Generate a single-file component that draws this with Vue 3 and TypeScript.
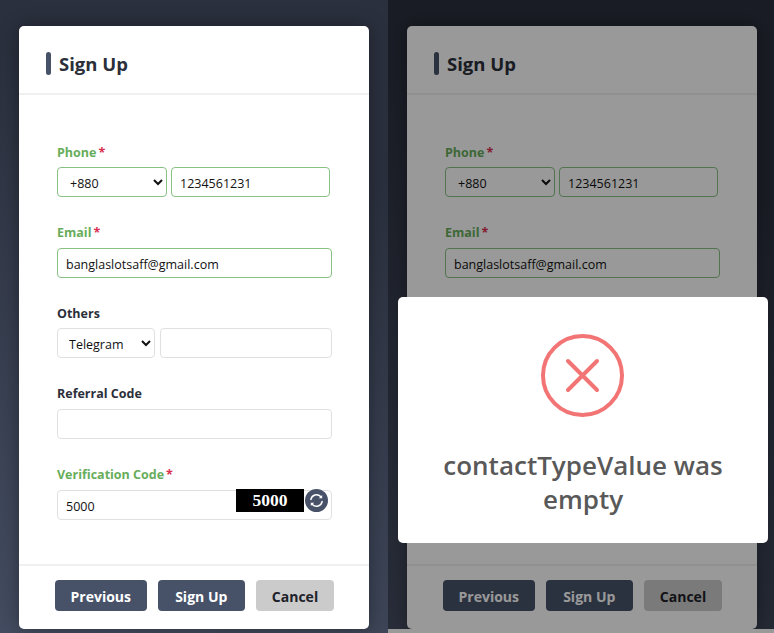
<script setup lang="ts">
const panels = [{ dimmed: false }, { dimmed: true }];
</script>

<template>
  <div class="screen">
    <section v-for="(panel, i) in panels" :key="i" class="panel" :class="{ dimmed: panel.dimmed }">
      <div class="card">
        <header class="card-head">
          <span class="accent"></span>
          <h1>Sign Up</h1>
        </header>

        <form class="card-body" @submit.prevent>
          <div class="field valid">
            <label>Phone<em>*</em></label>
            <div class="row phone">
              <select class="ctl sel-phone">
                <option>+880</option>
              </select>
              <input class="ctl grow" value="1234561231" />
            </div>
          </div>

          <div class="field valid">
            <label>Email<em>*</em></label>
            <input class="ctl" value="banglaslotsaff@gmail.com" />
          </div>

          <div class="field">
            <label>Others</label>
            <div class="row others">
              <select class="ctl sel-other">
                <option>Telegram</option>
              </select>
              <input class="ctl grow" />
            </div>
          </div>

          <div class="field">
            <label>Referral Code</label>
            <input class="ctl" />
          </div>

          <div class="field code">
            <label>Verification Code<em>*</em></label>
            <div class="code-wrap">
              <input class="ctl" value="5000" />
              <div class="captcha">
                <span class="captcha-img">5000</span>
                <span class="refresh">
                  <svg width="15" height="15" viewBox="0 0 15 15" fill="none">
                    <path d="M1.9 6.4A5.7 5.7 0 0 1 11.6 3.5" stroke="#fff" stroke-width="1.5" stroke-linecap="round" />
                    <path d="M13.2 1.9v3.4H9.8z" fill="#fff" />
                    <path d="M13.1 8.6A5.7 5.7 0 0 1 3.4 11.5" stroke="#fff" stroke-width="1.5" stroke-linecap="round" />
                    <path d="M1.8 13.1V9.7h3.4z" fill="#fff" />
                  </svg>
                </span>
              </div>
            </div>
          </div>
        </form>

        <footer class="card-foot">
          <button class="btn prev">Previous</button>
          <button class="btn submit">Sign Up</button>
          <button class="btn cancel">Cancel</button>
        </footer>
      </div>
      <div v-if="panel.dimmed" class="strip"></div>
    </section>

    <div class="alert">
      <svg class="alert-icon" width="83" height="83" viewBox="0 0 83 83" fill="none">
        <circle cx="41.5" cy="41.5" r="39.5" stroke="#f27474" stroke-width="4" />
        <path d="M27 27l29 29M56 27L27 56" stroke="#f27474" stroke-width="4" stroke-linecap="round" />
      </svg>
      <p>contactTypeValue was empty</p>
    </div>
  </div>
</template>

<style>
html,
body {
  margin: 0;
  overflow: hidden;
}
</style>

<style scoped>
.screen {
  position: relative;
  display: flex;
  width: 774px;
  height: 633px;
  overflow: hidden;
  font-family: "Open Sans", "Noto Sans", sans-serif;
  color: #2b2f3a;
}

.panel {
  position: relative;
  flex: 0 0 388px;
  box-sizing: border-box;
  padding: 26px 0 0 19px;
  background: linear-gradient(20deg, #434c60, #2b303e 75%);
}

.panel.dimmed {
  flex-basis: 386px;
}

.panel.dimmed::after {
  content: "";
  position: absolute;
  inset: 0;
  background: rgba(0, 0, 0, 0.4);
}

.strip {
  position: absolute;
  left: 0;
  right: 0;
  bottom: 0;
  height: 4px;
  background: #fff;
}

.card {
  display: flex;
  flex-direction: column;
  width: 350px;
  height: 603px;
  background: #fff;
  border-radius: 5px;
  box-shadow: 0 0 18px rgba(0, 0, 0, 0.35);
}

.card-head {
  display: flex;
  align-items: center;
  gap: 8px;
  box-sizing: border-box;
  height: 69px;
  padding: 8px 0 0 27px;
  border-bottom: 2px solid #f0f0f0;
}

.accent {
  width: 5px;
  height: 23px;
  border-radius: 3px;
  background: #475269;
}

.card-head h1 {
  margin: 0;
  font-size: 18.5px;
  font-weight: 700;
  color: #2b2f3a;
}

.card-body {
  flex: 1;
  box-sizing: border-box;
  padding: 48.5px 37px 0 38px;
}

.field {
  margin-bottom: 26.9px;
}

.field.code {
  margin-bottom: 0;
}

.field label {
  display: block;
  height: 23.7px;
  font-size: 12.5px;
  line-height: 18px;
  font-weight: 700;
  color: #2b2f3a;
}

.field em {
  margin-left: 2px;
  font-style: normal;
  color: #d9304f;
}

.field.valid label,
.field.code label {
  color: #67ad5b;
}

.row {
  display: flex;
  gap: 4px;
}

.row.others {
  gap: 5px;
}

.ctl {
  display: block;
  box-sizing: border-box;
  width: 100%;
  min-width: 0;
  height: 30px;
  padding: 3px 8px 0;
  background: #fff;
  border: 1px solid #e0e0e0;
  border-radius: 4px;
  outline: none;
  font-family: inherit;
  font-size: 12.5px;
  color: #111;
}

.valid .ctl {
  border-color: #88c283;
}

.grow {
  flex: 1;
}

.phone {
  width: 273px;
}

.sel-phone {
  flex: 0 0 110px;
  padding-left: 8px;
}

.sel-other {
  flex: 0 0 98px;
  padding-left: 7px;
}

.code-wrap {
  position: relative;
}

.captcha {
  position: absolute;
  top: -1px;
  right: 4px;
  display: flex;
  align-items: center;
  gap: 1px;
}

.captcha-img {
  width: 68px;
  height: 23px;
  background: #000;
  color: #fff;
  font-family: "Liberation Serif", serif;
  font-size: 17.5px;
  font-weight: 700;
  line-height: 23px;
  text-align: center;
}

.refresh {
  display: flex;
  align-items: center;
  justify-content: center;
  width: 23px;
  height: 23px;
  border-radius: 50%;
  background: #475269;
}

.card-foot {
  display: flex;
  gap: 11.5px;
  box-sizing: border-box;
  height: 65px;
  padding: 14px 0 0 36px;
  border-top: 2px solid #f0f0f0;
}

.btn {
  height: 31px;
  padding: 2px 0 0;
  border: 1px solid transparent;
  border-radius: 4px;
  font-family: inherit;
  font-size: 14px;
  font-weight: 700;
  color: #fff;
  background: #475269;
}

.prev {
  width: 91.5px;
}

.submit {
  width: 86.5px;
}

.cancel {
  width: 78px;
  background: #cbcbcb;
  color: #1e2129;
}

.alert {
  position: absolute;
  left: 398px;
  top: 297px;
  display: flex;
  flex-direction: column;
  align-items: center;
  box-sizing: border-box;
  width: 370px;
  height: 246px;
  padding: 37px 20px 0;
  background: #fff;
  border-radius: 5px;
}

.alert-icon {
  display: block;
  flex: none;
  margin-left: -1px;
}

.alert p {
  margin: 31px 0 0;
  font-size: 26px;
  line-height: 34px;
  font-weight: 600;
  text-align: center;
  color: #595959;
}
</style>
